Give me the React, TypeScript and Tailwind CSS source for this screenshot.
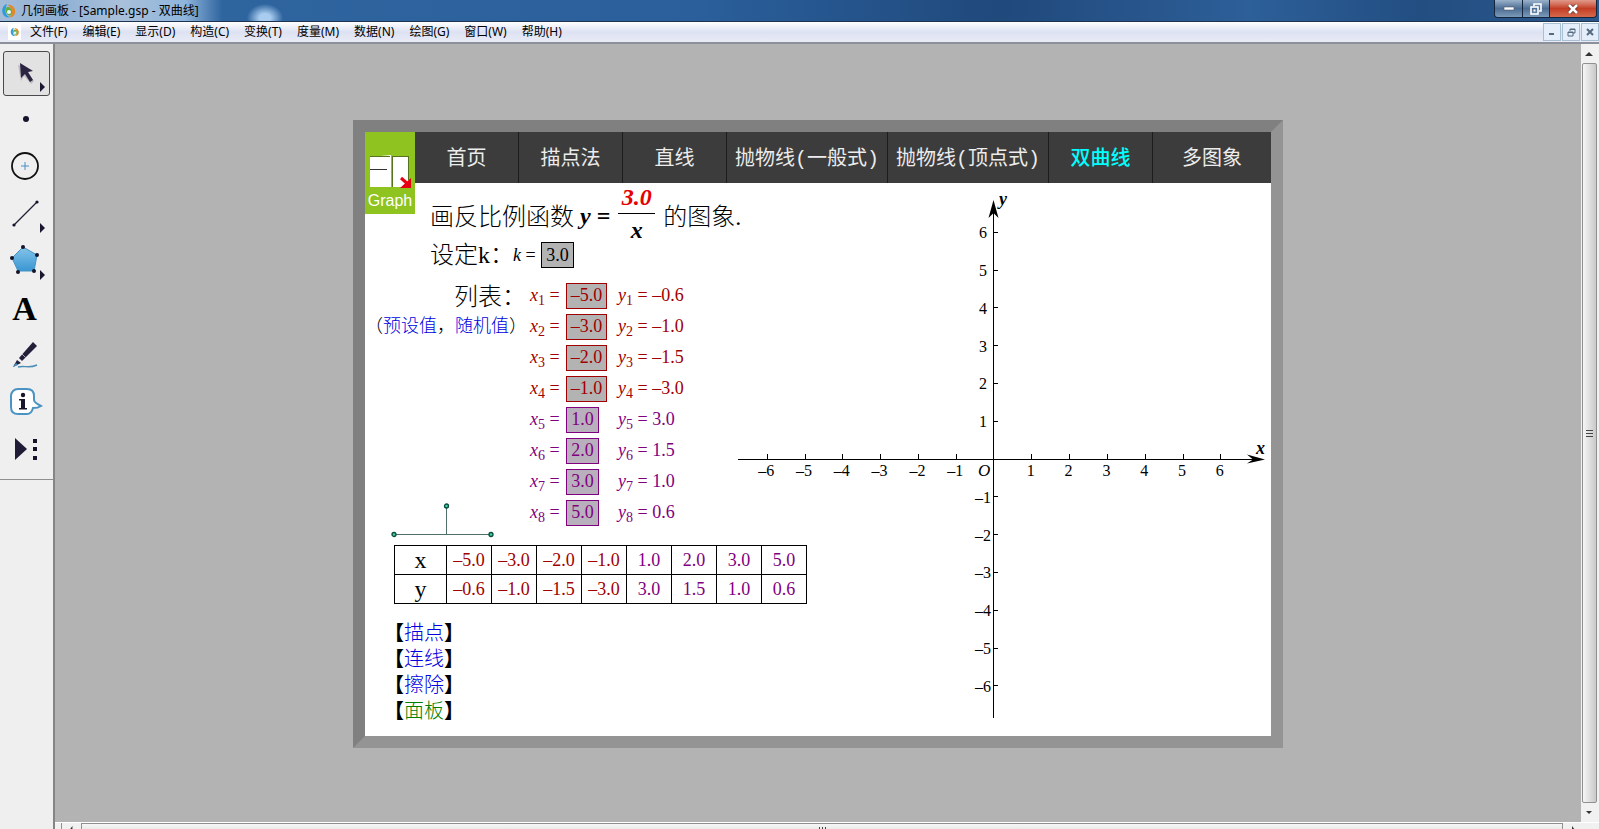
import React from 'react';

const MENUS = ['文件(F)', '编辑(E)', '显示(D)', '构造(C)', '变换(T)', '度量(M)', '数据(N)', '绘图(G)', '窗口(W)', '帮助(H)'];

const TABS = [
  { label: '首页', width: 'w-[104px]' },
  { label: '描点法', width: 'w-[104px]' },
  { label: '直线', width: 'w-[104px]' },
  { label: '抛物线(一般式)', width: 'w-[161px]' },
  { label: '抛物线(顶点式)', width: 'w-[161px]' },
  { label: '双曲线', width: 'w-[104px]', active: true },
  { label: '多图象', width: 'flex-1' },
];

const POINTS = [
  { x: '–5.0', y: '–0.6' },
  { x: '–3.0', y: '–1.0' },
  { x: '–2.0', y: '–1.5' },
  { x: '–1.0', y: '–3.0' },
  { x: '1.0', y: '3.0' },
  { x: '2.0', y: '1.5' },
  { x: '3.0', y: '1.0' },
  { x: '5.0', y: '0.6' },
];

const ACTIONS = [
  { label: '描点', color: 'text-[#0000e0]' },
  { label: '连线', color: 'text-[#0000e0]' },
  { label: '擦除', color: 'text-[#0000e0]' },
  { label: '面板', color: 'text-[#008000]' },
];

const UI_FONT = "font-['Noto_Sans','Noto_Sans_CJK_SC',sans-serif]";
const MATH_FONT = "font-['Liberation_Serif','Noto_Sans_CJK_SC',serif]";

const isNegative = (value: string) => value.startsWith('–');

const AppLogo = ({ size }: { size: number }) => (
  <svg width={size} height={size} viewBox="0 0 16 16" aria-hidden="true">
    <path d="M6 1C2 2 0 7 2 11c1 3 5 4 7 3C5 13 3 9 6 1z" fill="#2f9bd8" />
    <path d="M7 2c4-1 8 3 7 8-1 4-4 5-6 4 3-1 5-6-1-12z" fill="#e08a2c" />
    <path d="M6 4c3 0 5 2 5 5s-2 4-4 3c-2-2-3-5-1-8z" fill="#5fae3c" />
    <circle cx="8" cy="9" r="2" fill="#e9f6ff" />
  </svg>
);

const TitleBar = () => (
  <header className="flex h-[22px] shrink-0 items-start justify-between border-b border-[#1d3350] bg-[radial-gradient(ellipse_18px_14px_at_265px_18px,#a9cdf0_30%,transparent),linear-gradient(90deg,#a4bcd8_0px,#8fb0d4_60px,#a9c0da_120px,#8fb5dc_185px,#2f659f_222px,#2a5f9b_700px,#20497c_1000px,#2d5f98_1250px,#224e82_1420px,#2b588c_1599px)] pl-px pr-[2px]">
    <div className="flex h-[21px] items-center gap-1">
      <AppLogo size={16} />
      <h1 className="whitespace-nowrap text-[12px] leading-[20px] text-black">几何画板 - [Sample.gsp - 双曲线]</h1>
    </div>
    <div className="flex h-[18px] overflow-hidden rounded-b-[4px] border border-t-0 border-[#14263d]">
      <button aria-label="最小化" className="flex w-[28px] items-center justify-center border-r border-[#14263d] bg-linear-to-b from-[#9bb2cc] via-[#4d6e93] to-[#7c9ab9]">
        <svg width="12" height="6" viewBox="0 0 12 6"><rect x="1" y="1" width="10" height="3" fill="#fff" stroke="#4a5b70" strokeWidth=".6" /></svg>
      </button>
      <button aria-label="还原" className="flex w-[27px] items-center justify-center border-r border-[#14263d] bg-linear-to-b from-[#9bb2cc] via-[#4d6e93] to-[#7c9ab9]">
        <svg width="12" height="12" viewBox="0 0 12 12" fill="none" stroke="#fff" strokeWidth="1.6">
          <path d="M4 3V1h7v7H9" />
          <rect x="1" y="4" width="7" height="7" />
          <rect x="4" y="7" width="1" height="1" strokeWidth="1" />
        </svg>
      </button>
      <button aria-label="关闭" className="flex w-[46px] items-center justify-center bg-linear-to-b from-[#e09a8b] via-[#c33d25] to-[#d6694b]">
        <svg width="12" height="10" viewBox="0 0 12 10">
          <path d="M2 1l8 8M10 1L2 9" stroke="#5b2a26" strokeWidth="4" />
          <path d="M2 1l8 8M10 1L2 9" stroke="#fff" strokeWidth="2.6" />
        </svg>
      </button>
    </div>
  </header>
);

const MenuBar = () => (
  <nav className="flex h-[22px] shrink-0 items-stretch justify-between border-b-2 border-[#8b909b] bg-linear-to-b from-white via-[#dde2f3] to-[#e9ebf5]">
    <div className="flex items-center pl-2">
      <span className="flex h-4 w-[13px] items-center justify-center bg-white">
        <AppLogo size={10} />
      </span>
      <div className="ml-[9px] flex gap-[15px]">
        {MENUS.map((menu) => (
          <button key={menu} className="whitespace-nowrap text-[12px] leading-[18px] text-black">
            {menu}
          </button>
        ))}
      </div>
    </div>
    <div className="flex items-center gap-px text-[#55697f]">
      <button aria-label="最小化窗口" className="flex h-[18px] w-[18px] items-center justify-center border border-[#a9bfd4] bg-[#e4eefa]">
        <svg width="8" height="8" viewBox="0 0 8 8"><path d="M1 6h5" stroke="currentColor" strokeWidth="2" /></svg>
      </button>
      <button aria-label="还原窗口" className="flex h-[18px] w-[18px] items-center justify-center border border-[#a9bfd4] bg-[#e4eefa]">
        <svg width="9" height="9" viewBox="0 0 9 9" fill="none" stroke="currentColor"><path d="M3 3V1h5v4H6M3 1.5h5" /><path d="M1 4h5v4H1zM1 4.500h5" /></svg>
      </button>
      <button aria-label="关闭窗口" className="flex h-[18px] w-[18px] items-center justify-center border border-[#a9bfd4] bg-[#e4eefa]">
        <svg width="8" height="8" viewBox="0 0 8 8"><path d="M1 1l6 6M7 1L1 7" stroke="currentColor" strokeWidth="2" /></svg>
      </button>
    </div>
  </nav>
);

const Flyout = () => <path d="M36 30l5 5-5 5z" fill="#1a1830" />;

const TOOLS: { name: string; icon: React.ReactNode }[] = [
  {
    name: '移动箭头工具',
    icon: (
      <>
        <path d="M14 13l14 5-5 3 7 8-3 3-7-8-3 5z" fill="#9a98a8" opacity=".5" />
        <path d="M16 11l13 8-5 1 5 8-3 2-5-8-4 4z" fill="#2a2440" />
        <Flyout />
      </>
    ),
  },
  { name: '点工具', icon: <circle cx="22" cy="20" r="3" fill="#15132a" /> },
  {
    name: '圆工具',
    icon: (
      <>
        <circle cx="21" cy="20" r="13" fill="none" stroke="#111" strokeWidth="1.8" />
        <path d="M21 16v8M17 20h8" stroke="#4a90c4" />
      </>
    ),
  },
  {
    name: '线段直尺工具',
    icon: (
      <>
        <path d="M10 32L33 9" stroke="#222036" strokeWidth="1.300" />
        <circle cx="10" cy="32" r="1.600" fill="#15132a" />
        <circle cx="33" cy="9" r="1.600" fill="#15132a" />
        <Flyout />
      </>
    ),
  },
  {
    name: '多边形工具',
    icon: (
      <>
        <defs>
          <linearGradient id="pentagon" x1="0" y1="0" x2="0" y2="1">
            <stop offset="0" stopColor="#86c5ea" />
            <stop offset="1" stopColor="#3a96d2" />
          </linearGradient>
        </defs>
        <path d="M19 7l14 8-3 16H14L8 18z" fill="url(#pentagon)" stroke="#4392c4" />
        {[[19, 7], [33, 15], [30, 31], [14, 32], [8, 18]].map(([cx, cy]) => (
          <circle key={cx} cx={cx} cy={cy} r="2" fill="#15132a" />
        ))}
        <Flyout />
      </>
    ),
  },
  { name: '文字工具', icon: null },
  {
    name: '标记工具',
    icon: (
      <>
        <path d="M15 24L29 8l4 4-15 15z" fill="#231f38" />
        <path d="M13 26l4 3-8 4z" fill="#231f38" />
        <path d="M9 33l3-4 2 2z" fill="#3e92c8" />
        <path d="M14 33c7-2 10 2 19-2" fill="none" stroke="#4b8fb8" strokeWidth="1.400" />
        <path d="M18 20l4 4" stroke="#a9a7b8" />
      </>
    ),
  },
  {
    name: '信息工具',
    icon: (
      <>
        <path d="M14 8h9c5 0 7 3 7 7v4c0 2 3 4 7 6-3 2-6 2-8 2-1 4-3 6-6 6h-9c-5 0-7-3-7-7V15c0-4 3-7 7-7z" fill="#fff" stroke="#4b93c3" strokeWidth="2" />
        <circle cx="19" cy="14" r="2.200" fill="#18162c" />
        <path d="M15 18h6v9h2v1.500h-8V27h2v-7.500h-2z" fill="#18162c" />
      </>
    ),
  },
  {
    name: '自定义工具',
    icon: (
      <>
        <path d="M11 10l12 11-12 11z" fill="#201c36" />
        <path d="M29 11h4v4h-4zM29 19h4v4h-4zM29 28h4v4h-4z" fill="#15132a" />
      </>
    ),
  },
];

const Toolbox = () => (
  <aside className="w-[55px] shrink-0 border-r-2 border-[#858585] bg-[#efefef]">
    <div className="flex flex-col gap-[2px] border-b border-[#8f8f8f] pb-[7px] pl-[3px] pt-[7px]">
      {TOOLS.map((tool, i) => (
        <button
          key={tool.name}
          aria-label={tool.name}
          className={`flex h-[45px] w-[47px] items-center justify-center rounded-[3px] border ${i === 0 ? 'border-[#4a4a4a] bg-[#e2e2e2]' : 'border-transparent'}`}
        >
          {tool.icon ? (
            <svg width="45" height="43" viewBox="0 0 45 43">{tool.icon}</svg>
          ) : (
            <span className="pr-1 font-['Liberation_Serif',serif] text-[34px] font-bold leading-[42px] text-black">A</span>
          )}
        </button>
      ))}
    </div>
  </aside>
);

const GraphLogo = () => (
  <div className="flex h-[82px] w-[50px] shrink-0 flex-col items-center bg-[#8fc31f] pt-[23px]">
    <svg width="42" height="33" viewBox="0 0 42 33">
      <path d="M1 2l21-2v32H1z" fill="#fff" />
      <path d="M1 1.500h20M24 1.500h15" stroke="#55741c" />
      <rect x="24" y="2" width="15" height="30" fill="#fff" />
      <path d="M23.500 1v31M39.500 1v24" stroke="#55741c" />
      <path d="M1 14.500h17" stroke="#333" />
      <path d="M32 23l8 7" stroke="#e60012" strokeWidth="3" />
      <path d="M42 23v10H31z" fill="#e60012" />
    </svg>
    <span className="font-['Liberation_Sans',sans-serif] text-[16px] leading-[26px] text-white">Graph</span>
  </div>
);

const TabBar = () => (
  <nav className="flex h-[51px] items-start bg-[#3c3c3c]">
    <GraphLogo />
    {TABS.map((tab) => (
      <button
        key={tab.label}
        className={`h-full whitespace-nowrap border-r border-[#1c1c1c] pt-[6px] font-['Liberation_Mono','Noto_Sans_CJK_SC',monospace] text-[20px] last:border-r-0 ${tab.width} ${tab.active ? 'font-medium text-[#00ffff]' : 'text-[#ececec]'}`}
      >
        {tab.label}
      </button>
    ))}
  </nav>
);

const Formula = () => (
  <h2 className="ml-[65px] flex h-[58px] items-center whitespace-nowrap text-[24px] font-light">
    <span className="pt-[6px]">画反比例函数</span>
    <span className="ml-[6px] pt-[4px] font-bold">
      <i>y</i> =
    </span>
    <span className="ml-2 flex w-[37px] shrink-0 flex-col text-center font-bold italic leading-[32px]">
      <span className="border-b border-black text-[#e60000]">3.0</span>
      <span>x</span>
    </span>
    <span className="ml-2 pt-[6px]">的图象.</span>
  </h2>
);

const PointRow = ({ index, x, y }: { index: number; x: string; y: string }) => {
  const negative = isNegative(x);
  return (
    <li className={`flex h-[26px] items-center whitespace-nowrap text-[18px] ${negative ? 'text-[#a00000]' : 'text-[#800080]'}`}>
      <label htmlFor={`x${index}`} className="w-[36px]">
        <i>x</i>
        <sub className="text-[14px]">{index}</sub> =
      </label>
      <span className="w-[52px]">
        <input
          id={`x${index}`}
          defaultValue={x}
          className={`block h-[26px] border text-center ${negative ? 'w-[41px] border-[#a00000] bg-[#b3b3b3]' : 'w-[33px] border-[#800080] bg-[#b8b0bc]'}`}
        />
      </span>
      <span>
        <i>y</i>
        <sub className="text-[14px]">{index}</sub> = {y}
      </span>
    </li>
  );
};

const ValueTable = () => (
  <table className="ml-[29px] mt-[6px] w-[413px] table-fixed border-collapse text-center text-[18px]">
    <tbody>
      {(['x', 'y'] as const).map((axis) => (
        <tr key={axis} className="h-[29px]">
          <th className="w-[52px] border border-black text-[24px] font-normal leading-[24px]">{axis}</th>
          {POINTS.map((point) => (
            <td key={point.x} className={`border border-black leading-[24px] ${isNegative(point.x) ? 'text-[#a00000]' : 'text-[#800080]'}`}>
              {point[axis]}
            </td>
          ))}
        </tr>
      ))}
    </tbody>
  </table>
);

// Origin and unit length of the coordinate system
const OX = 256;
const OY = 276;
const UNIT = 37.8;
const TICKS = [-6, -5, -4, -3, -2, -1, 1, 2, 3, 4, 5, 6];
const tickLabel = (n: number) => (n < 0 ? `–${-n}` : `${n}`);

const Axes = () => (
  <svg width="533" height="553" viewBox="0 0 533 553" className="shrink-0" fontSize="16">
    <g stroke="#000" shapeRendering="crispEdges">
      <path d={`M0 ${OY + 0.5}H520M${OX - 0.5} 22V535`} />
      {TICKS.map((n) => (
        <path key={n} d={`M${OX + n * UNIT} ${OY}v-5M${OX} ${OY - n * UNIT}h4`} />
      ))}
    </g>
    <path d="M527 276.500l-18-5 6 5-6 4zM255.500 17l-5 18 5-5 5 5z" />
    {TICKS.map((n) => (
      <g key={n}>
        <text x={OX + n * UNIT - 1} y={OY + 17} textAnchor="middle">{tickLabel(n)}</text>
        <text x={n < 0 ? OX - 3 : OX - 7} y={OY - n * UNIT + 6} textAnchor="end">{tickLabel(n)}</text>
      </g>
    ))}
    <text x="240" y="293" fontSize="17" fontStyle="italic">O</text>
    <text x="261" y="22" fontSize="18" fontWeight="bold" fontStyle="italic">y</text>
    <text x="518" y="271" fontSize="18" fontWeight="bold" fontStyle="italic">x</text>
  </svg>
);

const Sketch = () => (
  <main className={`w-[930px] border-[12px] border-b-[#949494] border-l-[#808080] border-r-[#949494] border-t-[#808080] bg-white text-black ${MATH_FONT}`}>
    <TabBar />
    <div className="flex">
      <section className="w-[373px] shrink-0 pt-[2px]">
        <Formula />
        <div className="ml-[65px] flex h-[25px] items-center whitespace-nowrap">
          <span className="w-[83px] text-[24px] font-light">设定k：</span>
          <label htmlFor="k" className="w-[28px] text-[18px]">
            <i>k</i> =
          </label>
          <input id="k" defaultValue="3.0" className="h-[26px] w-[33px] border border-black bg-[#b3b3b3] text-center text-[18px]" />
        </div>
        <div className="mt-[15px] flex h-[256px]">
          <div className="flex w-[165px] shrink-0 flex-col whitespace-nowrap">
            <h3 className="ml-[89px] text-[24px] font-light leading-[28px]">列表：</h3>
            <p className="text-[18px] font-light leading-[30px]">
              （<button className="text-[#0000e0]">预设值</button>，<button className="text-[#0000e0]">随机值</button>）
            </p>
            <svg width="108" height="36" viewBox="0 0 108 36" className="ml-[25px] mt-auto">
              <path d="M4 31.500h97M56.500 3v28" stroke="#4f6f68" />
              {[[4, 31.5], [56.5, 3], [101, 31.5]].map(([cx, cy]) => (
                <circle key={cx} cx={cx} cy={cy} r="2" fill="#3fd0a8" stroke="#0b4a3c" strokeWidth="1.300" />
              ))}
            </svg>
          </div>
          <ol className="flex flex-col gap-[5px]">
            {POINTS.map((point, i) => (
              <PointRow key={point.x} index={i + 1} x={point.x} y={point.y} />
            ))}
          </ol>
        </div>
        <ValueTable />
        <ul className="ml-[19px] mt-4 text-[20px] font-light leading-[26px]">
          {ACTIONS.map((action) => (
            <li key={action.label}>
              <span className="font-black">【</span>
              <button className={action.color}>{action.label}</button>
              <span className="font-black">】</span>
            </li>
          ))}
        </ul>
      </section>
      <Axes />
    </div>
  </main>
);

const VerticalScrollbar = () => (
  <div className="flex w-[18px] shrink-0 flex-col items-center bg-[#f1f1f1] pr-[2px]" aria-hidden="true">
    <svg width="16" height="19" viewBox="0 0 16 19"><path d="M4 12l4-4 4 4z" fill="#333" /></svg>
    <div className="flex w-[15px] flex-1 items-center justify-center rounded-[2px] border border-[#909090] bg-linear-to-r from-[#f6f6f6] to-[#c9c9c9]">
      <svg width="7" height="9" viewBox="0 0 7 9"><path d="M0 1.500h7M0 4.500h7M0 7.500h7" stroke="#444" /></svg>
    </div>
    <svg width="16" height="19" viewBox="0 0 16 19"><path d="M5 8l3 3 3-3z" fill="#333" /></svg>
  </div>
);

const HorizontalScrollbar = () => (
  <div className="flex h-[7px] shrink-0 overflow-hidden border-t border-white bg-[#f1f1f1] pl-[6px] pr-[17px]" aria-hidden="true">
    <svg width="20" height="7" viewBox="0 0 20 7" className="border-l border-[#909090]"><path d="M11 3v4H8z" fill="#333" /></svg>
    <div className="flex h-[17px] flex-1 items-start justify-center border border-[#909090] bg-linear-to-b from-[#f6f6f6] to-[#d5d5d5] pt-[3px]">
      <svg width="9" height="7" viewBox="0 0 9 7"><path d="M1.500 0v7M4.500 0v7M7.500 0v7" stroke="#444" /></svg>
    </div>
    <svg width="19" height="7" viewBox="0 0 19 7"><path d="M9 3v4h3z" fill="#333" /></svg>
  </div>
);

export default function App() {
  return (
    <div className={`flex h-screen flex-col overflow-hidden bg-[#b3b3b3] ${UI_FONT}`}>
      <TitleBar />
      <MenuBar />
      <div className="flex min-h-0 flex-1">
        <Toolbox />
        <div className="flex min-w-0 flex-1 flex-col">
          <div className="flex min-h-0 flex-1">
            <div className="flex min-w-0 flex-1 items-center justify-center overflow-hidden pt-px">
              <Sketch />
            </div>
            <VerticalScrollbar />
          </div>
          <HorizontalScrollbar />
        </div>
      </div>
    </div>
  );
}
